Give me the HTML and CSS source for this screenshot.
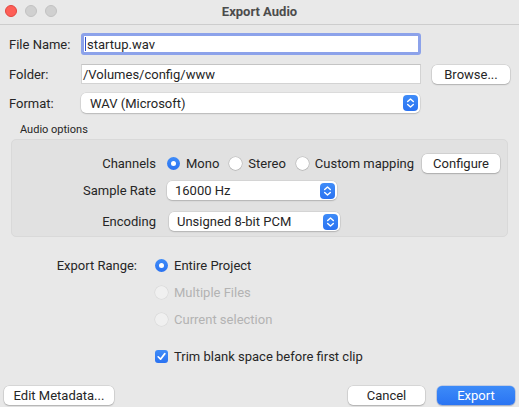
FILE: index.html
```html
<!DOCTYPE html>
<html>
<head>
<meta charset="utf-8">
<link rel="stylesheet" href="styles.css">
</head>
<body>
<div class="window">
  <div class="titlebar">
    <div class="lights">
      <span class="light red"></span>
      <span class="light gray"></span>
      <span class="light gray"></span>
    </div>
    <div class="title">Export Audio</div>
    <div></div>
  </div>

  <div class="top-grid">
    <div class="label">File Name:</div>
    <div class="field focused"><span class="caret"></span>startup.wav</div>
    <div></div>

    <div class="label">Folder:</div>
    <div class="field">/Volumes/config/www</div>
    <div class="button browse">Browse...</div>

    <div class="label">Format:</div>
    <div class="popup format"><span class="popup-text">WAV (Microsoft)</span><span class="stepper"><svg viewBox="0 0 16 16" width="16" height="16"><path d="M5 6.5 L8 3.8 L11 6.5" fill="none" stroke="#fff" stroke-width="1.5" stroke-linecap="round" stroke-linejoin="round"/><path d="M5 9.5 L8 12.2 L11 9.5" fill="none" stroke="#fff" stroke-width="1.5" stroke-linecap="round" stroke-linejoin="round"/></svg></span></div>
    <div></div>
  </div>

  <div class="group-title">Audio options</div>
  <div class="group">
    <div class="grow channels-row">
      <div class="glabel">Channels</div>
      <div class="options">
        <span class="radio on"></span><span class="opt">Mono</span>
        <span class="radio"></span><span class="opt">Stereo</span>
        <span class="radio"></span><span class="opt last">Custom mapping</span>
        <span class="button configure">Configure</span>
      </div>
    </div>
    <div class="grow rate-row">
      <div class="glabel">Sample Rate</div>
      <div class="popup rate"><span class="popup-text">16000 Hz</span><span class="stepper"><svg viewBox="0 0 16 16" width="16" height="16"><path d="M5 6.5 L8 3.8 L11 6.5" fill="none" stroke="#fff" stroke-width="1.5" stroke-linecap="round" stroke-linejoin="round"/><path d="M5 9.5 L8 12.2 L11 9.5" fill="none" stroke="#fff" stroke-width="1.5" stroke-linecap="round" stroke-linejoin="round"/></svg></span></div>
    </div>
    <div class="grow enc-row">
      <div class="glabel">Encoding</div>
      <div class="popup enc"><span class="popup-text">Unsigned 8-bit PCM</span><span class="stepper"><svg viewBox="0 0 16 16" width="16" height="16"><path d="M5 6.5 L8 3.8 L11 6.5" fill="none" stroke="#fff" stroke-width="1.5" stroke-linecap="round" stroke-linejoin="round"/><path d="M5 9.5 L8 12.2 L11 9.5" fill="none" stroke="#fff" stroke-width="1.5" stroke-linecap="round" stroke-linejoin="round"/></svg></span></div>
    </div>
  </div>

  <div class="range">
    <div class="rlabel">Export Range:</div>
    <div class="ropt"><span class="radio on"></span><span class="opt">Entire Project</span></div>
    <div></div>
    <div class="ropt disabled"><span class="radio dis"></span><span class="opt">Multiple Files</span></div>
    <div></div>
    <div class="ropt disabled"><span class="radio dis"></span><span class="opt">Current selection</span></div>
    <div></div>
    <div class="ropt check-row"><span class="checkbox"><svg viewBox="0 0 14 14" width="14" height="14"><path d="M3.4 7.3 L6 9.9 L10.6 3.9" fill="none" stroke="#fff" stroke-width="1.8" stroke-linecap="round" stroke-linejoin="round"/></svg></span><span class="opt">Trim blank space before first clip</span></div>
  </div>

  <div class="footer">
    <div class="button meta">Edit Metadata...</div>
    <div class="spacer"></div>
    <div class="button cancel">Cancel</div>
    <div class="button primary">Export</div>
  </div>
</div>
</body>
</html>
```
FILE: styles.css
```css
* { box-sizing: border-box; }
html, body { margin: 0; padding: 0; }
body {
  width: 519px;
  height: 407px;
  overflow: hidden;
  background: #e8e8e8;
  font-family: Roboto, "Noto Sans", sans-serif;
  font-size: 13px;
  color: #262626;
}
.window {
  height: 407px;
  display: flex;
  flex-direction: column;
}
.titlebar {
  height: 25px;
  flex: none;
  display: grid;
  grid-template-columns: 1fr auto 1fr;
  align-items: center;
  background: #e9e9e9;
  border-bottom: 1px solid #cdcdcd;
}
.lights {
  display: flex;
  gap: 8px;
  padding-left: 5px;
  margin-top: -2px;
}
.light {
  width: 12px;
  height: 12px;
  border-radius: 50%;
  display: block;
}
.light.red { background: #fe5f57; border: 0.5px solid #e2463f; }
.light.gray { background: #d0d0d0; border: 0.5px solid #c2c2c2; }
.title {
  font-weight: 700;
  font-size: 13px;
  color: #4c4c4c;
  margin-top: -2px;
}

.top-grid {
  display: grid;
  grid-template-columns: 61px 340px 78px;
  column-gap: 11px;
  grid-template-rows: 22px 20px 20px;
  row-gap: 9px;
  padding-left: 9px;
  margin-top: 8px;
  align-items: center;
}
.label { color: #262626; white-space: nowrap; }
.field {
  height: 20px;
  background: #fff;
  border: 1px solid #d3d3d3;
  border-top-color: #c4c4c4;
  padding-left: 1px;
  display: flex;
  align-items: center;
  line-height: 1;
}
.field.focused {
  height: 22px;
  border: 3px solid #8ca2ea;
  border-radius: 3px;
  padding-left: 1px;
}
.caret {
  width: 1px;
  height: 14px;
  background: #2f4fc8;
  margin-right: 1px;
}
.button {
  height: 19px;
  background: #fff;
  border-radius: 5px;
  box-shadow: 0 0 0 0.5px rgba(0,0,0,0.14), 0 1px 1.5px rgba(0,0,0,0.18);
  display: flex;
  align-items: center;
  justify-content: center;
  color: #262626;
  white-space: nowrap;
}
.browse { margin-top: 1px; }
.popup {
  height: 20px;
  background: #fff;
  border-radius: 5px;
  box-shadow: 0 0 0 0.5px rgba(0,0,0,0.1), 0 1px 1.5px rgba(0,0,0,0.16);
  display: flex;
  align-items: center;
  justify-content: space-between;
  padding-left: 9px;
  padding-right: 2px;
}
.format { width: 339px; }
.stepper {
  width: 15px;
  height: 16px;
  border-radius: 4px;
  background: linear-gradient(#3f8cf8, #2a72f1);
  display: flex;
  align-items: center;
  justify-content: center;
}
.stepper svg { width: 15px; height: 16px; }

.group-title {
  font-size: 11px;
  line-height: 14px;
  margin: 10px 0 0 20px;
  color: #262626;
}
.group {
  margin: 2px 0 0 11px;
  width: 497px;
  height: 98px;
  background: #e1e1e1;
  border: 1px solid #d9d9d9;
  border-radius: 5px;
}
.grow {
  display: grid;
  grid-template-columns: 144px auto;
  column-gap: 11px;
  align-items: center;
}
.glabel { text-align: right; white-space: nowrap; }
.channels-row { margin-top: 14px; height: 19px; }
.rate-row { margin-top: 8px; height: 19px; }
.enc-row { margin-top: 12px; height: 19px; }
.options {
  display: flex;
  align-items: center;
}
.radio {
  width: 13px;
  height: 13px;
  border-radius: 50%;
  background: #fff;
  box-shadow: 0 0 0 0.5px rgba(0,0,0,0.18), 0 0.5px 1px rgba(0,0,0,0.15);
  flex: none;
  display: inline-block;
  position: relative;
}
.radio.on {
  background: linear-gradient(#3f8cf8, #2a72f1);
  box-shadow: none;
}
.radio.on::after {
  content: "";
  position: absolute;
  left: 4px;
  top: 4px;
  width: 5px;
  height: 5px;
  border-radius: 50%;
  background: #fff;
}
.radio.dis {
  background: #f0f0f0;
  box-shadow: 0 0 0 0.5px rgba(0,0,0,0.08);
}
.opt { margin-left: 6px; margin-right: 10px; white-space: nowrap; }
.opt.last { margin-right: 8px; }
.configure { width: 78px; }
.rate { width: 170px; height: 19px; }
.enc { width: 171px; height: 19px; margin-left: 2px; }
.popup.rate, .popup.enc { padding-left: 8px; }

.range {
  display: grid;
  grid-template-columns: 137px auto;
  column-gap: 18px;
  grid-template-rows: 16px 16px 16px 16px;
  row-gap: 11px;
  margin-top: 20px;
  align-items: center;
}
.rlabel { text-align: right; white-space: nowrap; }
.ropt { display: flex; align-items: center; }
.ropt .opt { margin-left: 6px; }
.disabled .opt { color: #b3b3b3; }
.check-row { margin-top: 20px; }
.checkbox {
  width: 13px;
  height: 13px;
  border-radius: 3px;
  background: linear-gradient(#3f8cf8, #2a72f1);
  display: flex;
  align-items: center;
  justify-content: center;
  flex: none;
}
.checkbox svg { width: 13px; height: 13px; }

.footer {
  margin-top: auto;
  display: flex;
  align-items: center;
  padding: 0 4px 2px 4px;
  height: 22px;
}
.meta { width: 110px; }
.spacer { flex: 1; }
.cancel { width: 77px; }
.primary {
  width: 78px;
  margin-left: 12px;
  background: linear-gradient(#3d8bf8, #2a74f3);
  color: #fff;
  box-shadow: 0 0 0 0.5px rgba(0,60,200,0.3), 0 1px 1.5px rgba(0,0,0,0.18);
}
```
